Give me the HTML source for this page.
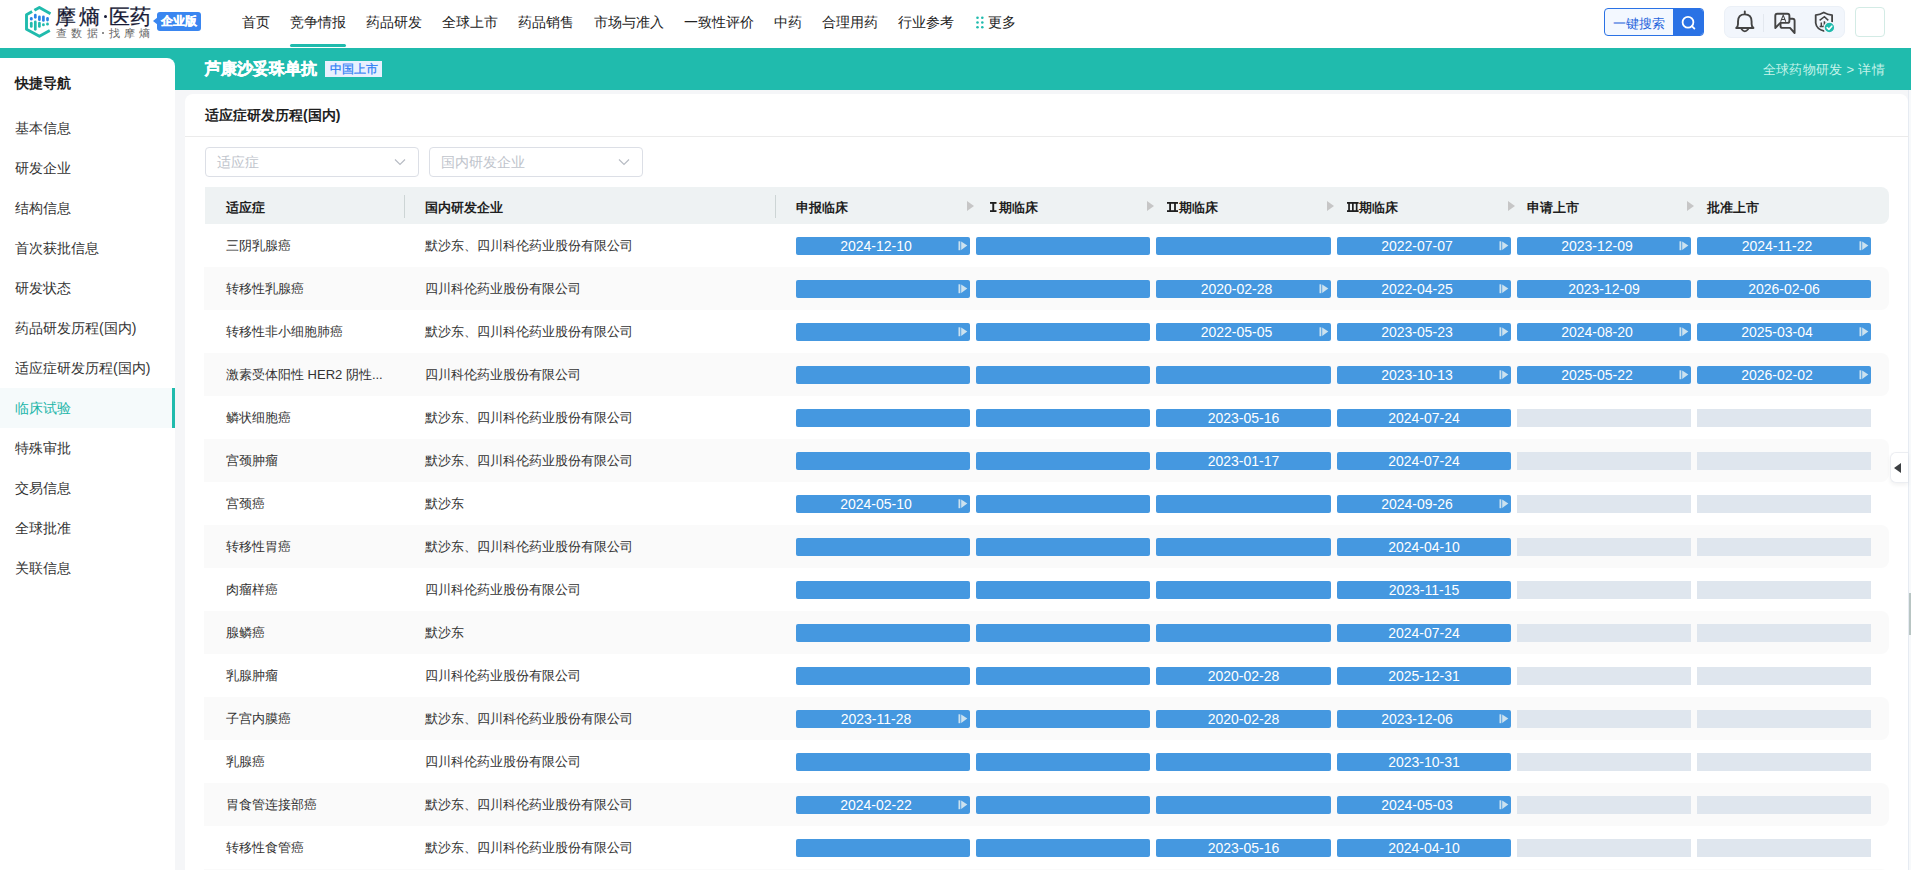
<!DOCTYPE html>
<html lang="zh">
<head>
<meta charset="utf-8">
<title>芦康沙妥珠单抗</title>
<style>
*{box-sizing:border-box;margin:0;padding:0}
html,body{width:1911px;height:870px;overflow:hidden;background:#f5f6f8;font-family:"Liberation Sans",sans-serif;color:#333}
.abs{position:absolute}
.logo{top:3px;font-size:21px;line-height:28px;font-weight:normal;-webkit-text-stroke:0.25px #181b36;color:#181b36;white-space:nowrap}
.sub{top:26px;font-size:11px;line-height:14px;color:#666;white-space:nowrap}
#hdr{position:absolute;left:0;top:0;width:1911px;height:48px;background:#fff}
.nav{position:absolute;top:0;height:44px;line-height:44px;font-size:14px;color:#222;white-space:nowrap}
#uline{position:absolute;left:290px;top:44px;width:56px;height:3px;border-radius:2px;background:#20bbad}
#band{position:absolute;left:0;top:48px;width:1911px;height:42px;background:#20bbad}
#side{position:absolute;left:0;top:58px;width:175px;height:812px;background:#fff;border-top-right-radius:8px}
.sitem{position:absolute;left:0;width:175px;height:40px;line-height:40px;padding-left:15px;font-size:14px;color:#333;white-space:nowrap}
.sitem.active{background:#f5fafb;color:#20b5a8}
.sitem.active:after{content:"";position:absolute;right:0;top:0;width:3px;height:40px;background:#20bbad}
#card{position:absolute;left:185px;top:94px;width:1723px;height:800px;background:#fff;border-radius:8px}
.cell{position:absolute;height:43px;line-height:43px;font-size:13px;color:#333;white-space:nowrap}
.stripe{position:absolute;left:204px;width:1685px;height:43px;background:#fafafa;border-radius:0 8px 8px 0}
.bar{position:absolute;width:174px;height:18px;background:#4598e0;border-radius:2px;color:#fff;font-size:14px;line-height:18px}
.bar.grey{background:#dfe6ee;border-radius:0}
.dt{display:block;text-align:center;white-space:nowrap}
.ico{position:absolute}
.hd{position:absolute;top:189px;height:37px;line-height:37px;font-size:13px;font-weight:bold;color:#1f1f1f;white-space:nowrap}
.harr{position:absolute;top:201px;width:0;height:0;border-top:5px solid transparent;border-bottom:5px solid transparent;border-left:7px solid #c6c6c6}
.rn{font-family:"Liberation Serif",serif;font-size:17px;letter-spacing:-0.5px}
.sep{position:absolute;top:195px;width:1px;height:23px;background:#cdd5d5}
.sel{position:absolute;top:147px;width:214px;height:30px;border:1px solid #dcdfe6;border-radius:4px;background:#fff}
.sel span{position:absolute;left:11px;top:0;line-height:28px;font-size:14px;color:#c0c4cc}
.sel svg{position:absolute;left:188px;top:9.5px}
</style>
</head>
<body>
<!-- header -->
<div id="hdr">
  <svg class="abs" style="left:24px;top:5px" width="30" height="34" viewBox="0 0 30 34">
    <path d="M10.4 5.3 L15.4 2.5 L26.5 8.7" fill="none" stroke="#20bbad" stroke-width="2.9" stroke-linejoin="round"/>
    <path d="M8.1 6.6 L2.5 9.7 L2.5 24.2 L15.4 31.3 L25.8 25.5" fill="none" stroke="#20bbad" stroke-width="2.9" stroke-linejoin="round"/>
    <g stroke-linecap="round" stroke-width="2.7">
      <line x1="7.3" y1="13.35" x2="7.3" y2="14.25" stroke="#2a84e6"/>
      <line x1="11.3" y1="10.05" x2="11.3" y2="12.35" stroke="#2a84e6"/>
      <line x1="15.4" y1="11.75" x2="15.4" y2="14.65" stroke="#2a84e6"/>
      <line x1="19.4" y1="11.75" x2="19.4" y2="15.45" stroke="#2a84e6"/>
      <line x1="23.5" y1="13.35" x2="23.5" y2="15.05" stroke="#2a84e6"/>
      <line x1="7.3" y1="18.15" x2="7.3" y2="21.45" stroke="#20bbad"/>
      <line x1="11.3" y1="16.95" x2="11.3" y2="24.35" stroke="#20bbad"/>
      <line x1="15.4" y1="18.15" x2="15.4" y2="21.45" stroke="#20bbad"/>
      <line x1="19.4" y1="19.6" x2="19.4" y2="19.9" stroke="#20bbad"/>
      <line x1="23.5" y1="18.9" x2="23.5" y2="19.2" stroke="#20bbad"/>
    </g>
  </svg>
  <div class="abs logo" style="left:55px">摩</div><div class="abs logo" style="left:79px">熵</div><div class="abs" style="left:104px;top:15px;width:3px;height:3px;border-radius:50%;background:#181b36"></div><div class="abs logo" style="left:109px">医</div><div class="abs logo" style="left:130px">药</div>
  <div class="abs sub" style="left:56px">查</div><div class="abs sub" style="left:71px">数</div><div class="abs sub" style="left:87px">据</div><div class="abs" style="left:102px;top:32px;width:1.6px;height:1.6px;border-radius:50%;background:#777"></div><div class="abs sub" style="left:109px">找</div><div class="abs sub" style="left:124px">摩</div><div class="abs sub" style="left:139px">熵</div>
  <div class="abs" style="left:153px;top:17px;width:0;height:0;border-top:4px solid transparent;border-bottom:4px solid transparent;border-right:5px solid #3a86f0"></div>
  <div class="abs" style="left:157px;top:12px;width:44px;height:19px;background:#3a86f0;border-radius:3px;color:#fff;font-size:12px;font-weight:bold;-webkit-text-stroke:0.3px #fff;line-height:19px;text-align:center">企业版</div>
<div class="nav" style="left:242px">首页</div>
<div class="nav" style="left:290px">竞争情报</div>
<div class="nav" style="left:366px">药品研发</div>
<div class="nav" style="left:442px">全球上市</div>
<div class="nav" style="left:518px">药品销售</div>
<div class="nav" style="left:594px">市场与准入</div>
<div class="nav" style="left:684px">一致性评价</div>
<div class="nav" style="left:774px">中药</div>
<div class="nav" style="left:822px">合理用药</div>
<div class="nav" style="left:898px">行业参考</div>
  <svg class="abs" style="left:976px;top:16px" width="8" height="14" viewBox="0 0 8 14">
    <g fill="#20bbad"><circle cx="1.5" cy="1.7" r="1.3"/><circle cx="6.3" cy="1.7" r="1.3"/><circle cx="1.5" cy="6.5" r="1.3"/><circle cx="6.3" cy="6.5" r="1.3"/><circle cx="1.5" cy="11.3" r="1.3"/><circle cx="6.3" cy="11.3" r="1.3"/></g>
  </svg>
  <div class="nav" style="left:988px">更多</div>
  <div id="uline"></div>
  <!-- search -->
  <div class="abs" style="left:1604px;top:8px;width:100px;height:28px;border:1px solid #2a72e5;border-radius:4px;background:#f3f8ff;overflow:hidden">
    <div class="abs" style="left:8px;top:1px;line-height:27px;font-size:13px;color:#1f64dc;white-space:nowrap">一键搜索</div>
    <div class="abs" style="left:68px;top:0;width:31px;height:26px;background:#2a72e5"></div>
    <svg class="abs" style="left:76px;top:6px" width="16" height="16" viewBox="0 0 16 16"><circle cx="7" cy="7.2" r="5.4" fill="none" stroke="#fff" stroke-width="1.8"/><line x1="10.9" y1="11.1" x2="13.4" y2="13.6" stroke="#fff" stroke-width="1.8" stroke-linecap="round"/></svg>
  </div>
  <!-- icons group -->
  <div class="abs" style="left:1724px;top:6px;width:121px;height:32px;background:#f2f6fc;border:1px solid #ebf0f7;border-radius:7px"></div>
  <svg class="abs" style="left:1733px;top:10px" width="24" height="24" viewBox="0 0 24 24">
    <path d="M11.8 1.5 L11.8 3.4" stroke="#444" stroke-width="1.9" stroke-linecap="round"/>
    <path d="M3.2 18 Q5 16.6 5 14 L5 11.5 Q5 4.4 11.8 4.4 Q18.6 4.4 18.6 11.5 L18.6 14 Q18.6 16.6 20.5 18 Z" fill="none" stroke="#444" stroke-width="1.9" stroke-linejoin="round"/>
    <path d="M8.6 19.2 Q11.8 23.4 15.1 19.2" fill="none" stroke="#444" stroke-width="1.8" stroke-linecap="round"/>
  </svg>
  <div class="abs" style="left:1763px;top:14px;width:1px;height:18px;background:#e3e8ef"></div>
  <svg class="abs" style="left:1773px;top:11px" width="24" height="24" viewBox="0 0 24 24">
    <path d="M2.3 17 L2.3 4.8 Q2.3 2.8 4.3 2.8 L14.4 2.8 Q16.4 2.8 16.4 4.8 L16.4 9.9 Q16.4 11.9 14.4 11.9 L7.3 11.9 Z" fill="none" stroke="#444" stroke-width="1.9" stroke-linejoin="round"/>
    <path d="M16.4 7.7 L19.6 7.7 Q21.6 7.7 21.6 9.7 L21.6 22 L17 16.9 L9.5 16.9 Q7.5 16.9 7.5 14.9 L7.5 11.9" fill="none" stroke="#444" stroke-width="1.9" stroke-linejoin="round"/>
    <path d="M7.6 10.8 L10.2 4.1 L12.8 10.8 M8.6 8.5 L11.8 8.5" fill="none" stroke="#444" stroke-width="1.05"/>
  </svg>
  <svg class="abs" style="left:1813px;top:11px" width="24" height="24" viewBox="0 0 24 24">
    <path d="M19.1 11.2 L19.1 4.2 Q14.6 3.6 10.8 1.5 Q7 3.6 2.7 4.2 L2.7 12 Q3.5 18.2 11.4 20.2" fill="none" stroke="#444" stroke-width="1.8" stroke-linejoin="round"/>
    <path d="M6.6 9.4 L11.4 5.7 L15.3 9.4 M11.4 10.3 L11.4 15.5 M8.3 11.5 L8.3 15.5 M6.6 15.5 L13 15.5 M11.4 12.5 L14 12.5" fill="none" stroke="#444" stroke-width="1.5"/>
    <circle cx="16.4" cy="16.5" r="5.3" fill="#20bbad" stroke="#f2f6fc" stroke-width="1.2"/>
    <path d="M14.1 16.7 L15.9 18.4 L18.8 15.2" fill="none" stroke="#fff" stroke-width="1.6" stroke-linecap="round" stroke-linejoin="round"/>
  </svg>
  <div class="abs" style="left:1855px;top:7px;width:30px;height:30px;border:1px solid #d3ebe5;border-radius:4px;background:#fff"></div>
</div>

<div id="band"></div>
<div class="abs" style="left:205px;top:57px;height:24px;line-height:24px;font-size:16px;font-weight:bold;color:#fff;-webkit-text-stroke:0.4px #fff;white-space:nowrap">芦康沙妥珠单抗</div>
<div class="abs" style="left:325px;top:61px;width:57px;height:16px;line-height:16px;background:#e8f0fe;color:#2f7ff5;-webkit-text-stroke:0.25px #2f7ff5;font-size:12px;text-align:center;white-space:nowrap">中国上市</div>
<div class="abs" style="right:26px;top:58px;line-height:24px;font-size:13px;letter-spacing:0.3px;color:#c6f3ea;white-space:nowrap">全球药物研发 &gt; 详情</div>

<div id="side">
  <div class="abs" style="left:15px;top:15px;line-height:20px;font-size:14px;font-weight:bold;color:#1f1f1f">快捷导航</div>
</div>
<div style="position:absolute;left:0;top:0;width:175px">
<div class="sitem" style="top:108px">基本信息</div>
<div class="sitem" style="top:148px">研发企业</div>
<div class="sitem" style="top:188px">结构信息</div>
<div class="sitem" style="top:228px">首次获批信息</div>
<div class="sitem" style="top:268px">研发状态</div>
<div class="sitem" style="top:308px">药品研发历程(国内)</div>
<div class="sitem" style="top:348px">适应症研发历程(国内)</div>
<div class="sitem active" style="top:388px">临床试验</div>
<div class="sitem" style="top:428px">特殊审批</div>
<div class="sitem" style="top:468px">交易信息</div>
<div class="sitem" style="top:508px">全球批准</div>
<div class="sitem" style="top:548px">关联信息</div>
</div>

<div id="card"></div>
<div class="abs" style="left:1908px;top:90px;width:3px;height:780px;background:#f7f9fb"></div>
<div class="abs" style="left:1908px;top:90px;width:1px;height:780px;background:#e6ebf2"></div>
<div class="abs" style="left:1909px;top:593px;width:2px;height:42px;background:#b8c5c3"></div>
<div class="abs" style="left:205px;top:104px;line-height:22px;font-size:14px;font-weight:bold;color:#1f1f1f;white-space:nowrap">适应症研发历程(国内)</div>
<div class="abs" style="left:185px;top:136px;width:1724px;height:1px;background:#ebebeb"></div>

<div class="sel" style="left:205px"><span>适应症</span><svg width="12" height="8" viewBox="0 0 12 8"><path d="M1 1.5 L6 6.5 L11 1.5" fill="none" stroke="#b8bcc4" stroke-width="1.2"/></svg></div>
<div class="sel" style="left:429px"><span>国内研发企业</span><svg width="12" height="8" viewBox="0 0 12 8"><path d="M1 1.5 L6 6.5 L11 1.5" fill="none" stroke="#b8bcc4" stroke-width="1.2"/></svg></div>

<!-- table header -->
<div class="abs" style="left:205px;top:187px;width:1684px;height:37px;background:#eef2f3;border-radius:0 8px 8px 0"></div>
<div class="hd" style="left:226px">适应症</div>
<div class="sep" style="left:404px"></div>
<div class="hd" style="left:425px">国内研发企业</div>
<div class="sep" style="left:775px"></div>
<div class="hd" style="left:796px">申报临床</div>
<div class="harr" style="left:967px"></div>
<svg class="abs" style="left:989.5px;top:202px" width="7" height="10"><g fill="#1f1f1f"><rect x="0" y="0" width="6.5" height="1.8"/><rect x="0" y="8.2" width="6.5" height="1.8"/><rect x="2.3" y="0" width="1.9" height="10"/></g></svg>
<div class="hd" style="left:999px">期临床</div>
<div class="harr" style="left:1147px"></div>
<svg class="abs" style="left:1167px;top:202px" width="11" height="10"><g fill="#1f1f1f"><rect x="0" y="0" width="11" height="1.8"/><rect x="0" y="8.2" width="11" height="1.8"/><rect x="2.2" y="0" width="1.8" height="10"/><rect x="7.1" y="0" width="1.8" height="10"/></g></svg>
<div class="hd" style="left:1179px">期临床</div>
<div class="harr" style="left:1327px"></div>
<svg class="abs" style="left:1347px;top:202px" width="12" height="10"><g fill="#1f1f1f"><rect x="0" y="0" width="11.6" height="1.8"/><rect x="0" y="8.2" width="11.6" height="1.8"/><rect x="1.2" y="0" width="1.7" height="10"/><rect x="5" y="0" width="1.7" height="10"/><rect x="8.8" y="0" width="1.7" height="10"/></g></svg>
<div class="hd" style="left:1359px">期临床</div>
<div class="harr" style="left:1508px"></div>
<div class="hd" style="left:1527px">申请上市</div>
<div class="harr" style="left:1687px"></div>
<div class="hd" style="left:1707px">批准上市</div>

<div class="cell" style="left:226px;top:224px">三阴乳腺癌</div>
<div class="cell" style="left:425px;top:224px">默沙东、四川科伦药业股份有限公司</div>
<div class="bar" style="left:796px;top:237px"><span class="dt" style="width:160px">2024-12-10</span></div>
<svg class="ico" style="left:958px;top:240.8px" width="10" height="10" viewBox="0 0 10 10"><rect x="0.5" y="0.3" width="1.8" height="8.9" fill="#cce2ef"/><path d="M3.2 0.5 L9.3 4.6 L3.2 8.9 Z" fill="#cce2ef"/></svg>
<div class="bar" style="left:976px;top:237px"></div>
<div class="bar" style="left:1156px;top:237px;width:175px"></div>
<div class="bar" style="left:1337px;top:237px"><span class="dt" style="width:160px">2022-07-07</span></div>
<svg class="ico" style="left:1499px;top:240.8px" width="10" height="10" viewBox="0 0 10 10"><rect x="0.5" y="0.3" width="1.8" height="8.9" fill="#cce2ef"/><path d="M3.2 0.5 L9.3 4.6 L3.2 8.9 Z" fill="#cce2ef"/></svg>
<div class="bar" style="left:1517px;top:237px"><span class="dt" style="width:160px">2023-12-09</span></div>
<svg class="ico" style="left:1679px;top:240.8px" width="10" height="10" viewBox="0 0 10 10"><rect x="0.5" y="0.3" width="1.8" height="8.9" fill="#cce2ef"/><path d="M3.2 0.5 L9.3 4.6 L3.2 8.9 Z" fill="#cce2ef"/></svg>
<div class="bar" style="left:1697px;top:237px"><span class="dt" style="width:160px">2024-11-22</span></div>
<svg class="ico" style="left:1859px;top:240.8px" width="10" height="10" viewBox="0 0 10 10"><rect x="0.5" y="0.3" width="1.8" height="8.9" fill="#cce2ef"/><path d="M3.2 0.5 L9.3 4.6 L3.2 8.9 Z" fill="#cce2ef"/></svg>
<div class="stripe" style="top:267px"></div>
<div class="cell" style="left:226px;top:267px">转移性乳腺癌</div>
<div class="cell" style="left:425px;top:267px">四川科伦药业股份有限公司</div>
<div class="bar" style="left:796px;top:280px"></div>
<svg class="ico" style="left:958px;top:283.8px" width="10" height="10" viewBox="0 0 10 10"><rect x="0.5" y="0.3" width="1.8" height="8.9" fill="#cce2ef"/><path d="M3.2 0.5 L9.3 4.6 L3.2 8.9 Z" fill="#cce2ef"/></svg>
<div class="bar" style="left:976px;top:280px"></div>
<div class="bar" style="left:1156px;top:280px;width:175px"><span class="dt" style="width:161px">2020-02-28</span></div>
<svg class="ico" style="left:1319px;top:283.8px" width="10" height="10" viewBox="0 0 10 10"><rect x="0.5" y="0.3" width="1.8" height="8.9" fill="#cce2ef"/><path d="M3.2 0.5 L9.3 4.6 L3.2 8.9 Z" fill="#cce2ef"/></svg>
<div class="bar" style="left:1337px;top:280px"><span class="dt" style="width:160px">2022-04-25</span></div>
<svg class="ico" style="left:1499px;top:283.8px" width="10" height="10" viewBox="0 0 10 10"><rect x="0.5" y="0.3" width="1.8" height="8.9" fill="#cce2ef"/><path d="M3.2 0.5 L9.3 4.6 L3.2 8.9 Z" fill="#cce2ef"/></svg>
<div class="bar" style="left:1517px;top:280px"><span class="dt" style="width:174px">2023-12-09</span></div>
<div class="bar" style="left:1697px;top:280px"><span class="dt" style="width:174px">2026-02-06</span></div>
<div class="cell" style="left:226px;top:310px">转移性非小细胞肺癌</div>
<div class="cell" style="left:425px;top:310px">默沙东、四川科伦药业股份有限公司</div>
<div class="bar" style="left:796px;top:323px"></div>
<svg class="ico" style="left:958px;top:326.8px" width="10" height="10" viewBox="0 0 10 10"><rect x="0.5" y="0.3" width="1.8" height="8.9" fill="#cce2ef"/><path d="M3.2 0.5 L9.3 4.6 L3.2 8.9 Z" fill="#cce2ef"/></svg>
<div class="bar" style="left:976px;top:323px"></div>
<div class="bar" style="left:1156px;top:323px;width:175px"><span class="dt" style="width:161px">2022-05-05</span></div>
<svg class="ico" style="left:1319px;top:326.8px" width="10" height="10" viewBox="0 0 10 10"><rect x="0.5" y="0.3" width="1.8" height="8.9" fill="#cce2ef"/><path d="M3.2 0.5 L9.3 4.6 L3.2 8.9 Z" fill="#cce2ef"/></svg>
<div class="bar" style="left:1337px;top:323px"><span class="dt" style="width:160px">2023-05-23</span></div>
<svg class="ico" style="left:1499px;top:326.8px" width="10" height="10" viewBox="0 0 10 10"><rect x="0.5" y="0.3" width="1.8" height="8.9" fill="#cce2ef"/><path d="M3.2 0.5 L9.3 4.6 L3.2 8.9 Z" fill="#cce2ef"/></svg>
<div class="bar" style="left:1517px;top:323px"><span class="dt" style="width:160px">2024-08-20</span></div>
<svg class="ico" style="left:1679px;top:326.8px" width="10" height="10" viewBox="0 0 10 10"><rect x="0.5" y="0.3" width="1.8" height="8.9" fill="#cce2ef"/><path d="M3.2 0.5 L9.3 4.6 L3.2 8.9 Z" fill="#cce2ef"/></svg>
<div class="bar" style="left:1697px;top:323px"><span class="dt" style="width:160px">2025-03-04</span></div>
<svg class="ico" style="left:1859px;top:326.8px" width="10" height="10" viewBox="0 0 10 10"><rect x="0.5" y="0.3" width="1.8" height="8.9" fill="#cce2ef"/><path d="M3.2 0.5 L9.3 4.6 L3.2 8.9 Z" fill="#cce2ef"/></svg>
<div class="stripe" style="top:353px"></div>
<div class="cell" style="left:226px;top:353px">激素受体阳性 HER2 阴性...</div>
<div class="cell" style="left:425px;top:353px">四川科伦药业股份有限公司</div>
<div class="bar" style="left:796px;top:366px"></div>
<div class="bar" style="left:976px;top:366px"></div>
<div class="bar" style="left:1156px;top:366px;width:175px"></div>
<div class="bar" style="left:1337px;top:366px"><span class="dt" style="width:160px">2023-10-13</span></div>
<svg class="ico" style="left:1499px;top:369.8px" width="10" height="10" viewBox="0 0 10 10"><rect x="0.5" y="0.3" width="1.8" height="8.9" fill="#cce2ef"/><path d="M3.2 0.5 L9.3 4.6 L3.2 8.9 Z" fill="#cce2ef"/></svg>
<div class="bar" style="left:1517px;top:366px"><span class="dt" style="width:160px">2025-05-22</span></div>
<svg class="ico" style="left:1679px;top:369.8px" width="10" height="10" viewBox="0 0 10 10"><rect x="0.5" y="0.3" width="1.8" height="8.9" fill="#cce2ef"/><path d="M3.2 0.5 L9.3 4.6 L3.2 8.9 Z" fill="#cce2ef"/></svg>
<div class="bar" style="left:1697px;top:366px"><span class="dt" style="width:160px">2026-02-02</span></div>
<svg class="ico" style="left:1859px;top:369.8px" width="10" height="10" viewBox="0 0 10 10"><rect x="0.5" y="0.3" width="1.8" height="8.9" fill="#cce2ef"/><path d="M3.2 0.5 L9.3 4.6 L3.2 8.9 Z" fill="#cce2ef"/></svg>
<div class="cell" style="left:226px;top:396px">鳞状细胞癌</div>
<div class="cell" style="left:425px;top:396px">默沙东、四川科伦药业股份有限公司</div>
<div class="bar" style="left:796px;top:409px"></div>
<div class="bar" style="left:976px;top:409px"></div>
<div class="bar" style="left:1156px;top:409px;width:175px"><span class="dt" style="width:175px">2023-05-16</span></div>
<div class="bar" style="left:1337px;top:409px"><span class="dt" style="width:174px">2024-07-24</span></div>
<div class="bar grey" style="left:1517px;top:409px"></div>
<div class="bar grey" style="left:1697px;top:409px"></div>
<div class="stripe" style="top:439px"></div>
<div class="cell" style="left:226px;top:439px">宫颈肿瘤</div>
<div class="cell" style="left:425px;top:439px">默沙东、四川科伦药业股份有限公司</div>
<div class="bar" style="left:796px;top:452px"></div>
<div class="bar" style="left:976px;top:452px"></div>
<div class="bar" style="left:1156px;top:452px;width:175px"><span class="dt" style="width:175px">2023-01-17</span></div>
<div class="bar" style="left:1337px;top:452px"><span class="dt" style="width:174px">2024-07-24</span></div>
<div class="bar grey" style="left:1517px;top:452px"></div>
<div class="bar grey" style="left:1697px;top:452px"></div>
<div class="cell" style="left:226px;top:482px">宫颈癌</div>
<div class="cell" style="left:425px;top:482px">默沙东</div>
<div class="bar" style="left:796px;top:495px"><span class="dt" style="width:160px">2024-05-10</span></div>
<svg class="ico" style="left:958px;top:498.8px" width="10" height="10" viewBox="0 0 10 10"><rect x="0.5" y="0.3" width="1.8" height="8.9" fill="#cce2ef"/><path d="M3.2 0.5 L9.3 4.6 L3.2 8.9 Z" fill="#cce2ef"/></svg>
<div class="bar" style="left:976px;top:495px"></div>
<div class="bar" style="left:1156px;top:495px;width:175px"></div>
<div class="bar" style="left:1337px;top:495px"><span class="dt" style="width:160px">2024-09-26</span></div>
<svg class="ico" style="left:1499px;top:498.8px" width="10" height="10" viewBox="0 0 10 10"><rect x="0.5" y="0.3" width="1.8" height="8.9" fill="#cce2ef"/><path d="M3.2 0.5 L9.3 4.6 L3.2 8.9 Z" fill="#cce2ef"/></svg>
<div class="bar grey" style="left:1517px;top:495px"></div>
<div class="bar grey" style="left:1697px;top:495px"></div>
<div class="stripe" style="top:525px"></div>
<div class="cell" style="left:226px;top:525px">转移性胃癌</div>
<div class="cell" style="left:425px;top:525px">默沙东、四川科伦药业股份有限公司</div>
<div class="bar" style="left:796px;top:538px"></div>
<div class="bar" style="left:976px;top:538px"></div>
<div class="bar" style="left:1156px;top:538px;width:175px"></div>
<div class="bar" style="left:1337px;top:538px"><span class="dt" style="width:174px">2024-04-10</span></div>
<div class="bar grey" style="left:1517px;top:538px"></div>
<div class="bar grey" style="left:1697px;top:538px"></div>
<div class="cell" style="left:226px;top:568px">肉瘤样癌</div>
<div class="cell" style="left:425px;top:568px">四川科伦药业股份有限公司</div>
<div class="bar" style="left:796px;top:581px"></div>
<div class="bar" style="left:976px;top:581px"></div>
<div class="bar" style="left:1156px;top:581px;width:175px"></div>
<div class="bar" style="left:1337px;top:581px"><span class="dt" style="width:174px">2023-11-15</span></div>
<div class="bar grey" style="left:1517px;top:581px"></div>
<div class="bar grey" style="left:1697px;top:581px"></div>
<div class="stripe" style="top:611px"></div>
<div class="cell" style="left:226px;top:611px">腺鳞癌</div>
<div class="cell" style="left:425px;top:611px">默沙东</div>
<div class="bar" style="left:796px;top:624px"></div>
<div class="bar" style="left:976px;top:624px"></div>
<div class="bar" style="left:1156px;top:624px;width:175px"></div>
<div class="bar" style="left:1337px;top:624px"><span class="dt" style="width:174px">2024-07-24</span></div>
<div class="bar grey" style="left:1517px;top:624px"></div>
<div class="bar grey" style="left:1697px;top:624px"></div>
<div class="cell" style="left:226px;top:654px">乳腺肿瘤</div>
<div class="cell" style="left:425px;top:654px">四川科伦药业股份有限公司</div>
<div class="bar" style="left:796px;top:667px"></div>
<div class="bar" style="left:976px;top:667px"></div>
<div class="bar" style="left:1156px;top:667px;width:175px"><span class="dt" style="width:175px">2020-02-28</span></div>
<div class="bar" style="left:1337px;top:667px"><span class="dt" style="width:174px">2025-12-31</span></div>
<div class="bar grey" style="left:1517px;top:667px"></div>
<div class="bar grey" style="left:1697px;top:667px"></div>
<div class="stripe" style="top:697px"></div>
<div class="cell" style="left:226px;top:697px">子宫内膜癌</div>
<div class="cell" style="left:425px;top:697px">默沙东、四川科伦药业股份有限公司</div>
<div class="bar" style="left:796px;top:710px"><span class="dt" style="width:160px">2023-11-28</span></div>
<svg class="ico" style="left:958px;top:713.8px" width="10" height="10" viewBox="0 0 10 10"><rect x="0.5" y="0.3" width="1.8" height="8.9" fill="#cce2ef"/><path d="M3.2 0.5 L9.3 4.6 L3.2 8.9 Z" fill="#cce2ef"/></svg>
<div class="bar" style="left:976px;top:710px"></div>
<div class="bar" style="left:1156px;top:710px;width:175px"><span class="dt" style="width:175px">2020-02-28</span></div>
<div class="bar" style="left:1337px;top:710px"><span class="dt" style="width:160px">2023-12-06</span></div>
<svg class="ico" style="left:1499px;top:713.8px" width="10" height="10" viewBox="0 0 10 10"><rect x="0.5" y="0.3" width="1.8" height="8.9" fill="#cce2ef"/><path d="M3.2 0.5 L9.3 4.6 L3.2 8.9 Z" fill="#cce2ef"/></svg>
<div class="bar grey" style="left:1517px;top:710px"></div>
<div class="bar grey" style="left:1697px;top:710px"></div>
<div class="cell" style="left:226px;top:740px">乳腺癌</div>
<div class="cell" style="left:425px;top:740px">四川科伦药业股份有限公司</div>
<div class="bar" style="left:796px;top:753px"></div>
<div class="bar" style="left:976px;top:753px"></div>
<div class="bar" style="left:1156px;top:753px;width:175px"></div>
<div class="bar" style="left:1337px;top:753px"><span class="dt" style="width:174px">2023-10-31</span></div>
<div class="bar grey" style="left:1517px;top:753px"></div>
<div class="bar grey" style="left:1697px;top:753px"></div>
<div class="stripe" style="top:783px"></div>
<div class="cell" style="left:226px;top:783px">胃食管连接部癌</div>
<div class="cell" style="left:425px;top:783px">默沙东、四川科伦药业股份有限公司</div>
<div class="bar" style="left:796px;top:796px"><span class="dt" style="width:160px">2024-02-22</span></div>
<svg class="ico" style="left:958px;top:799.8px" width="10" height="10" viewBox="0 0 10 10"><rect x="0.5" y="0.3" width="1.8" height="8.9" fill="#cce2ef"/><path d="M3.2 0.5 L9.3 4.6 L3.2 8.9 Z" fill="#cce2ef"/></svg>
<div class="bar" style="left:976px;top:796px"></div>
<div class="bar" style="left:1156px;top:796px;width:175px"></div>
<div class="bar" style="left:1337px;top:796px"><span class="dt" style="width:160px">2024-05-03</span></div>
<svg class="ico" style="left:1499px;top:799.8px" width="10" height="10" viewBox="0 0 10 10"><rect x="0.5" y="0.3" width="1.8" height="8.9" fill="#cce2ef"/><path d="M3.2 0.5 L9.3 4.6 L3.2 8.9 Z" fill="#cce2ef"/></svg>
<div class="bar grey" style="left:1517px;top:796px"></div>
<div class="bar grey" style="left:1697px;top:796px"></div>
<div class="cell" style="left:226px;top:826px">转移性食管癌</div>
<div class="cell" style="left:425px;top:826px">默沙东、四川科伦药业股份有限公司</div>
<div class="bar" style="left:796px;top:839px"></div>
<div class="bar" style="left:976px;top:839px"></div>
<div class="bar" style="left:1156px;top:839px;width:175px"><span class="dt" style="width:175px">2023-05-16</span></div>
<div class="bar" style="left:1337px;top:839px"><span class="dt" style="width:174px">2024-04-10</span></div>
<div class="bar grey" style="left:1517px;top:839px"></div>
<div class="bar grey" style="left:1697px;top:839px"></div>
<div class="stripe" style="top:869px"></div>

<!-- collapse tab -->
<div class="abs" style="left:1890px;top:452px;width:18px;height:31px;background:#fff;border:1px solid #eceef2;border-right:none;border-radius:6px 0 0 6px;box-shadow:0 2px 4px rgba(0,0,0,0.06)"></div>
<div class="abs" style="left:1894px;top:463px;width:0;height:0;border-top:5.5px solid transparent;border-bottom:5.5px solid transparent;border-right:7.5px solid #3d4043"></div>
</body>
</html>
